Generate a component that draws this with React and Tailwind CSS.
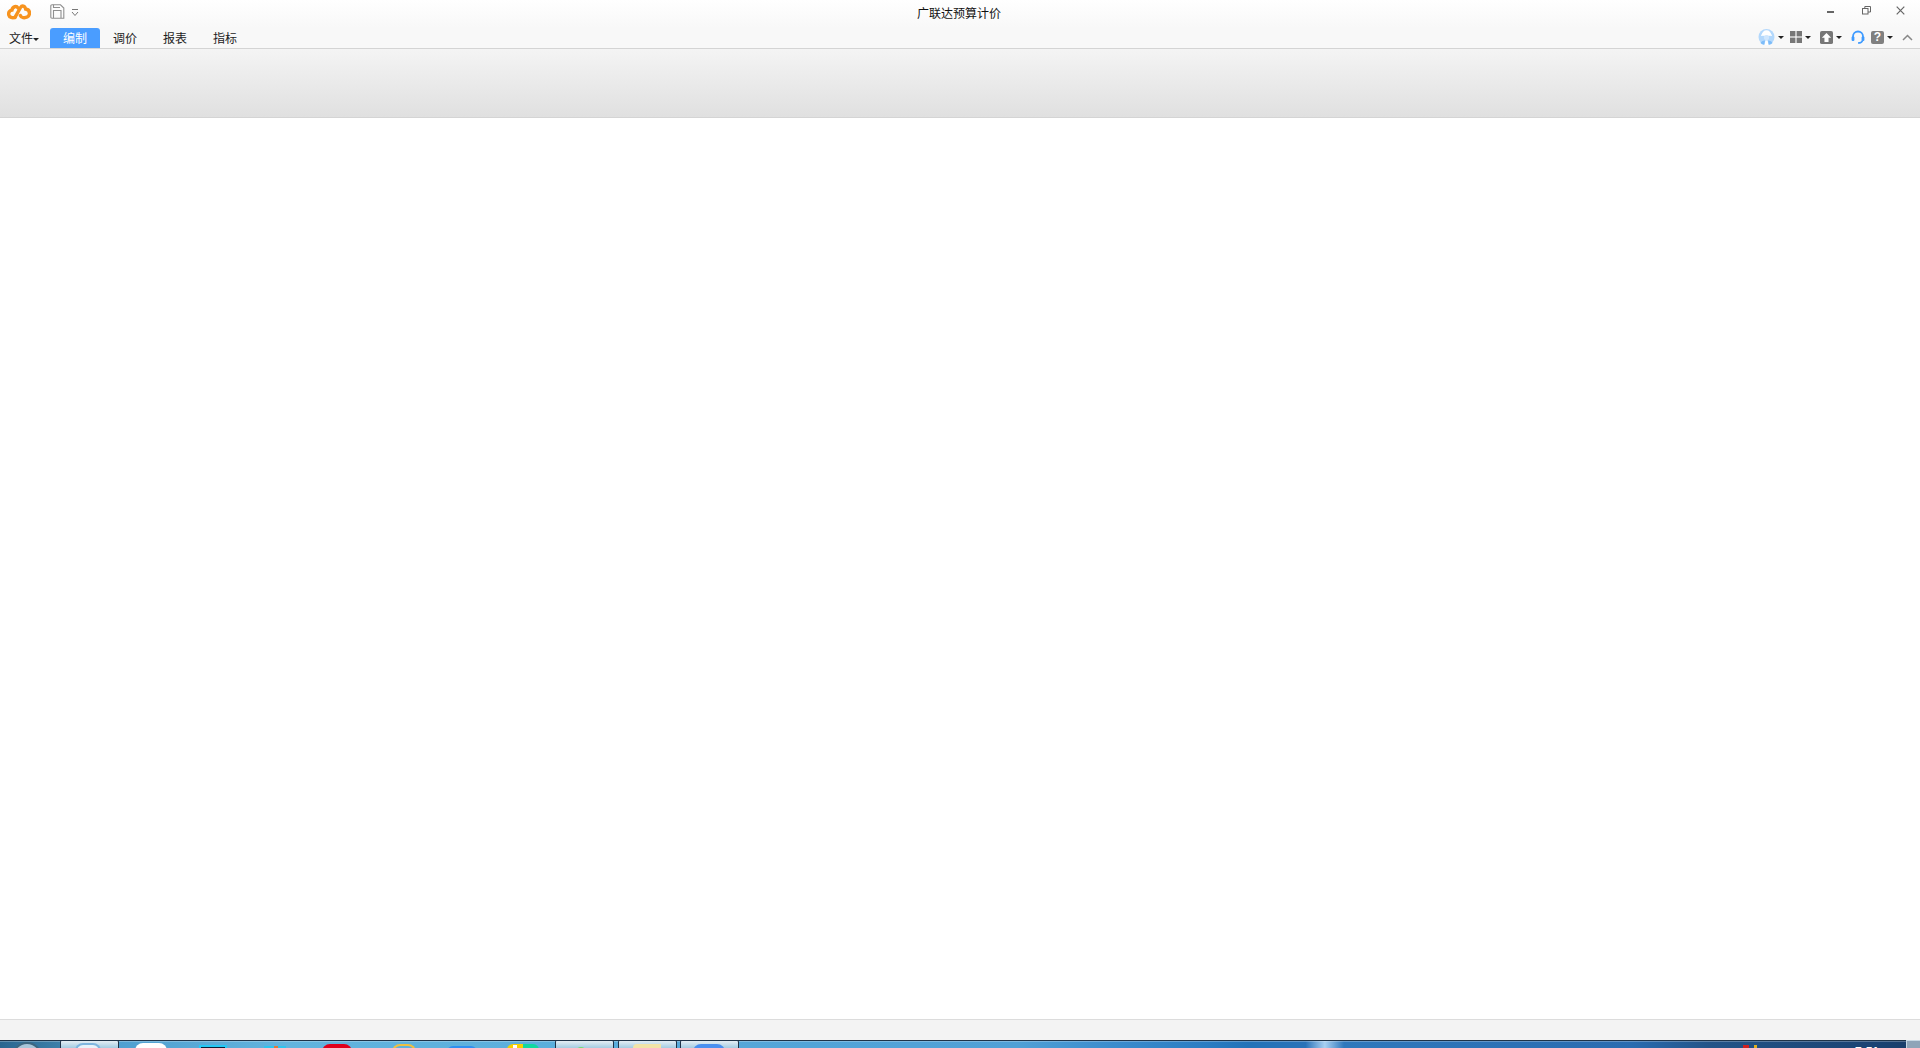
const FONT = "font-['Liberation_Sans','Noto_Sans_CJK_SC',sans-serif]";

function Caret({ className = "" }) {
  return <span className={`inline-block w-0 h-0 border-x-[3px] border-x-transparent border-t-[3px] border-t-[#222] ${className}`} />;
}

function Logo() {
  return (
    <svg width="24" height="18" viewBox="0 0 24 18" fill="none" stroke="#f7931e" strokeWidth="3.4" strokeLinecap="round">
      <path d="M11 5 C9.5 2.5 5.5 3.5 5 7 C2.5 7.5 1.2 9.5 1.8 12 C2.4 14.6 5.5 15.2 8 14.4" />
      <path d="M8 14.4 L13.5 4.5 C15 2 18 2.6 18.6 6 C21 6.4 22.8 8 22.4 11 C22 14 19 15 16 14.6 C14.6 14.4 13.8 13.6 13.4 12.6" />
    </svg>
  );
}

function SaveIcon() {
  return (
    <svg width="15" height="15" viewBox="0 0 15 15" fill="none" stroke="#8f8f8f" strokeWidth="1.1">
      <path d="M2 .8 H10.5 L13.8 4 V14.2 H2 Q.8 14.2 .8 13 V2 Q.8 .8 2 .8 Z" />
      <path d="M3.5 14 V6.5 H11 V14" />
      <path d="M3.5 .8 V3.5 H10" />
    </svg>
  );
}

function HelmetUser() {
  return (
    <svg width="17" height="16" viewBox="0 0 17 16">
      <circle cx="8.5" cy="8" r="8" fill="#b3d8fc" />
      <path d="M3.8 6 A4.7 4.7 0 0 1 13.2 6 Z" fill="#fff" />
      <rect x="3" y="5.6" width="11" height="1.2" fill="#fff" />
      <circle cx="8.5" cy="8.6" r="2.6" fill="#cfe6fd" />
      <path d="M6.4 16 L7.4 11.5 H9.6 L10.6 16 Z" fill="#fff" />
      <path d="M2.5 14 Q3.5 11.5 7 11.5 L6.2 15.8 Q3.8 15.4 2.5 14 Z M14.5 14 Q13.5 11.5 10 11.5 L10.8 15.8 Q13.2 15.4 14.5 14 Z" fill="#7dbcf9" />
    </svg>
  );
}

function GridIcon() {
  return (
    <svg width="12" height="12" viewBox="0 0 12 12" fill="#777">
      <rect width="5.4" height="5.4" />
      <rect x="6.6" width="5.4" height="5.4" />
      <rect y="6.6" width="5.4" height="5.4" />
      <rect x="6.6" y="6.6" width="5.4" height="5.4" />
    </svg>
  );
}

function UploadIcon() {
  return (
    <svg width="13" height="13" viewBox="0 0 14 14">
      <rect width="14" height="14" rx="2" fill="#777" />
      <path d="M7 2.2 L12 7.2 H9.2 V11.8 H4.8 V7.2 H2 Z" fill="#fff" />
    </svg>
  );
}

function HeadsetIcon() {
  return (
    <svg width="14" height="14" viewBox="0 0 14 14" fill="none">
      <path d="M2 8 V6.5 A5 5 0 0 1 12 6.5 V8" stroke="#3f9bff" strokeWidth="1.8" />
      <rect x="0.6" y="6.4" width="2.8" height="4.6" rx="1" fill="#3f9bff" />
      <rect x="10.6" y="6.4" width="2.8" height="4.6" rx="1" fill="#3f9bff" />
      <path d="M11.5 10.5 Q11 13 7 13" stroke="#3f9bff" strokeWidth="1.6" />
    </svg>
  );
}

function HelpIcon() {
  return (
    <div className="w-[13px] h-[13px] rounded-[2px] bg-[#808080] flex items-center justify-center text-white text-[12px] leading-none font-bold">?</div>
  );
}

function Tab({ label, active }) {
  return (
    <div className={`w-[50px] h-5 flex items-center justify-center text-xs pt-[2px] rounded-t-[3px] ${active ? "bg-[#4a9dff] text-white" : "text-[#222]"}`}>
      {label}
    </div>
  );
}

// things on the taskbar that are cut off by the bottom of the screen
const tasks = [
  "left-[135px] top-[3px] w-8 bg-white rounded-t-xl",
  "left-[199px] top-[5px] w-7 bg-[#0c2038] border-2 border-[#25c8f5]",
  "left-[264px] top-[6px] w-[10px] bg-[#2fc4ee]",
  "left-[274px] top-[6px] w-[4px] bg-[#e0783a]",
  "left-[278px] top-[6px] w-[8px] bg-[#2fc4ee]",
  "left-[322px] top-[4px] w-[30px] bg-[#e0001b] rounded-t-xl",
  "left-[392px] top-[4px] w-6 border-t-2 border-x-2 border-[#f0c040] rounded-t-full",
  "left-[447px] top-[6px] w-[30px] bg-[#2f8ff0] rounded-t-md",
  "left-[507px] top-[4px] w-[16px] bg-[#f8d000] rounded-tl-md",
  "left-[523px] top-[4px] w-[16px] bg-[#10d8a0] rounded-tr-md",
  "left-[75px] top-[3px] w-[26px] bg-[#e8f2fa] border-2 border-[#7fb6df] rounded-t-full",
  "left-[575px] top-[7px] w-3 bg-[#6fe070] rounded-t-full",
  "left-[633px] top-[4px] w-7 bg-[#f2e4a8] rounded-tl-sm",
  "left-[693px] top-[4px] w-8 bg-[#4a90f0] rounded-t-lg",
];

const buttons = ["left-[60px]", "left-[555px]", "left-[618px]", "left-[680px]"];

export default function App() {
  return (
    <div className={`h-[1048px] w-[1920px] flex flex-col overflow-hidden bg-white ${FONT}`}>
      {/* title bar */}
      <div className="h-[28px] shrink-0 bg-gradient-to-b from-white to-[#f8f8f8] grid grid-cols-[1fr_auto_1fr] items-center">
        <div className="flex items-center">
          <div className="ml-[7px] mt-[-5px]"><Logo /></div>
          <div className="ml-[19px] mt-[-5px]"><SaveIcon /></div>
          <svg className="ml-[6px] mt-[-3px]" width="8" height="9" viewBox="0 0 8 9" fill="none" stroke="#777">
            <path d="M1 1.5 H7" />
            <path d="M1 4 L4 7.5 L7 4" />
          </svg>
        </div>
        <div className="text-xs text-[#111] mr-[2px] mt-0">广联达预算计价</div>
        <div className="flex items-center justify-end mt-[-8px] mr-[15px]">
          <div className="w-[7px] h-[2px] bg-[#666] mt-[4px]" />
          <svg className="ml-[28px]" width="9" height="9" viewBox="0 0 9 9" fill="none" stroke="#666">
            <rect x="0.5" y="2.5" width="5.5" height="5.5" />
            <path d="M2.8 2.5 V.5 H8.5 V6 H6" />
          </svg>
          <svg className="ml-[25px]" width="9" height="9" viewBox="0 0 9 9" fill="none" stroke="#666" strokeWidth="1.2">
            <path d="M.7 .7 L8.3 8.3 M8.3 .7 L.7 8.3" />
          </svg>
        </div>
      </div>

      {/* tabs */}
      <div className="h-5 shrink-0 bg-[#f8f8f8] flex items-center">
        <div className="ml-[9px] pt-[2px] w-[41px] flex items-center text-xs text-[#222]">文件<Caret /></div>
        <Tab label="编制" active />
        <Tab label="调价" />
        <Tab label="报表" />
        <Tab label="指标" />
        <div className="ml-auto mr-[7px] flex items-center mb-[2px]">
          <HelmetUser />
          <Caret className="ml-[3px]" />
          <div className="ml-[6px]"><GridIcon /></div>
          <Caret className="ml-[3px]" />
          <div className="ml-[9px]"><UploadIcon /></div>
          <Caret className="ml-[3px]" />
          <div className="ml-[9px]"><HeadsetIcon /></div>
          <div className="ml-[6px]"><HelpIcon /></div>
          <Caret className="ml-[3px]" />
          <svg className="ml-[9px]" width="11" height="7" viewBox="0 0 11 7" fill="none" stroke="#888" strokeWidth="1.5">
            <path d="M1 6 L5.5 1.5 L10 6" />
          </svg>
        </div>
      </div>

      {/* empty ribbon */}
      <div className="h-[70px] shrink-0 border-y border-y-[#d4d4d4] bg-gradient-to-b from-[#f4f4f4] to-[#e0e0e0]" />

      <div className="flex-1 bg-white" />

      {/* status bar */}
      <div className="h-[21px] shrink-0 border-t border-t-[#dcdcdc] bg-[#f3f3f3]" />

      {/* windows taskbar, mostly cut off by the screen edge */}
      <div className="h-[8px] shrink-0 overflow-hidden relative bg-[linear-gradient(90deg,#2a6690_0%,#3b7ea8_3%,#4f9fd0_6%,#62b4de_15%,#5aaedc_30%,#52a4d8_42%,#50a0d6_53%,#3b8ccd_58%,#2a7cc2_63%,#2272b8_65%,#2a72b8_68%,#a8d0f2_69%,#2f78bc_70%,#2a6cb0_85%,#235488_89%,#1a4272_98%,#1a3c66_100%)]">
        <div className="absolute inset-x-0 top-0 h-px bg-[#1e3348]" />
        <div className="absolute inset-x-0 top-px h-px bg-white/25" />
        <div className="absolute left-[12px] top-[2px] w-[30px] h-[30px] rounded-full bg-[#a9c6da] border-2 border-[#3d6680]" />
        {buttons.map((b) => (
          <div key={b} className={`absolute top-0 w-[59px] h-[8px] bg-gradient-to-b from-[#e4eef4] to-[#a4cce2] border-x border-t border-[#1e3348] rounded-t-[2px] ${b}`} />
        ))}
        {tasks.map((t) => (
          <div key={t} className={`absolute h-[8px] ${t}`} />
        ))}
        <div className="absolute left-[513px] top-[5px] w-[4px] h-[3px] bg-white" />
        <div className="absolute left-[1743px] top-[5px] w-[6px] h-[3px] bg-[#d02020]" />
        <div className="absolute left-[1754px] top-[5px] w-[3px] h-[3px] bg-[#e0b020]" />
        <div className="absolute left-[1855px] top-[4px] text-white text-xs leading-[16px] font-bold">7:51</div>
        <div className="absolute right-0 top-0 w-[14px] h-[8px] bg-[#8ea4b8] border-l border-t border-[#c8d8e4]" />
      </div>
    </div>
  );
}
